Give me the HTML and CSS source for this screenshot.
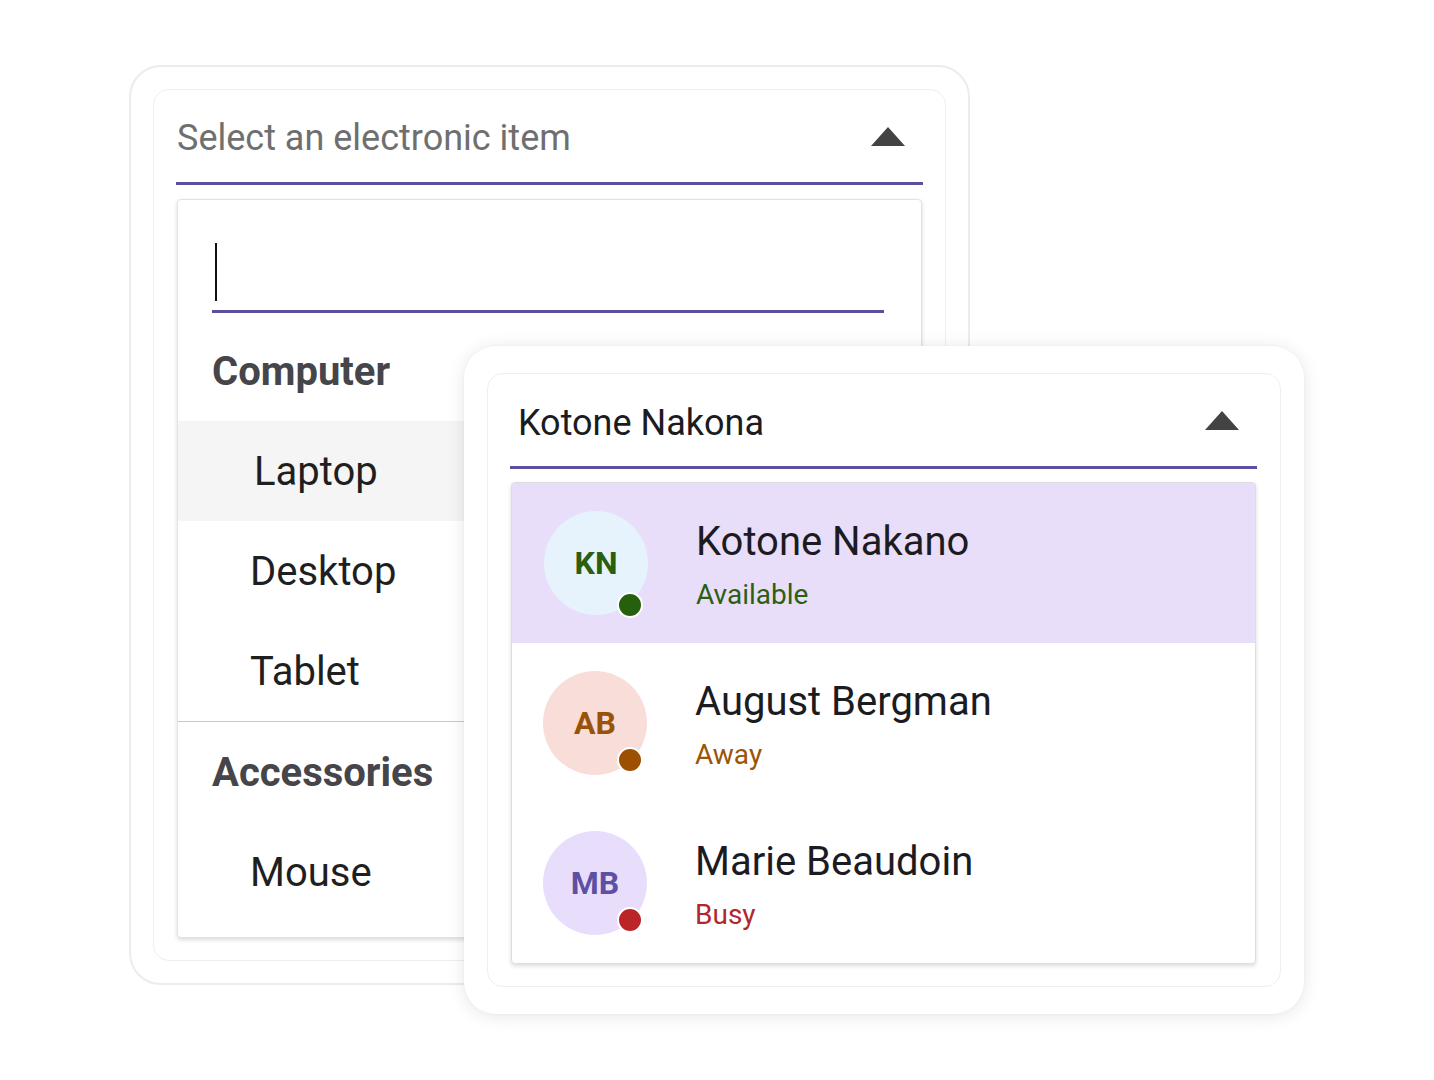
FILE: index.html
```html
<!DOCTYPE html>
<html>
<head>
<meta charset="utf-8">
<link rel="stylesheet" href="styles.css">
</head>
<body>
<div class="stage">
  <section class="card card-one">
    <div class="inner">
      <div class="field">
        <span class="placeholder">Select an electronic item</span>
        <svg class="arrow" width="34" height="19" viewBox="0 0 34 19"><polygon points="0,19 17,0 34,19" fill="#434343"/></svg>
      </div>
      <div class="popup">
        <div class="search"><span class="caret"></span></div>
        <div class="group-head">Computer</div>
        <div class="item item-hover">Laptop</div>
        <div class="item">Desktop</div>
        <div class="item">Tablet</div>
        <div class="divider"></div>
        <div class="group-head">Accessories</div>
        <div class="item">Mouse</div>
      </div>
    </div>
  </section>

  <section class="card card-two">
    <div class="inner">
      <div class="field">
        <span class="value">Kotone Nakona</span>
        <svg class="arrow" width="34" height="19" viewBox="0 0 34 19"><polygon points="0,19 17,0 34,19" fill="#434343"/></svg>
      </div>
      <div class="popup people">
        <div class="person selected">
          <div class="avatar av-kn">KN<span class="dot dot-green"></span></div>
          <div class="info">
            <div class="name">Kotone Nakano</div>
            <div class="status st-green">Available</div>
          </div>
        </div>
        <div class="person">
          <div class="avatar av-ab">AB<span class="dot dot-brown"></span></div>
          <div class="info">
            <div class="name">August Bergman</div>
            <div class="status st-brown">Away</div>
          </div>
        </div>
        <div class="person">
          <div class="avatar av-mb">MB<span class="dot dot-red"></span></div>
          <div class="info">
            <div class="name">Marie Beaudoin</div>
            <div class="status st-red">Busy</div>
          </div>
        </div>
      </div>
    </div>
  </section>
</div>
</body>
</html>
```

FILE: styles.css
```css
* { box-sizing: border-box; }
html, body { margin: 0; padding: 0; background: #ffffff; }
body { font-family: Roboto, "Noto Sans", "Liberation Sans", sans-serif; }

.stage {
  position: relative;
  width: 1434px;
  height: 1080px;
  padding: 65px 0 0 129px;
}

.card {
  background: #ffffff;
  border-radius: 32px;
}

.card-one {
  width: 841px;
  height: 920px;
  border: 2px solid #ececec;
  padding: 22px;
}

.card-two {
  position: absolute;
  left: 464px;
  top: 346px;
  width: 840px;
  height: 668px;
  padding: 27px 23px;
  box-shadow: 0 2px 18px rgba(0, 0, 0, 0.10), 0 0 3px rgba(0, 0, 0, 0.04);
}

.inner {
  height: 100%;
  border: 1px solid #efefef;
  border-radius: 16px;
  padding: 0 22px;
  display: flex;
  flex-direction: column;
}

.card-two .inner { padding: 0 23px 0 22px; }

.field {
  height: 95px;
  border-bottom: 3px solid #5c4f9f;
  display: flex;
  align-items: center;
  justify-content: space-between;
  flex-shrink: 0;
}

.placeholder {
  font-size: 36px;
  color: #6f6f6f;
  padding-left: 1px;
  padding-top: 4px;
}

.value {
  font-size: 36px;
  color: #1c1b1f;
  padding-left: 8px;
  padding-top: 5px;
}

.arrow { margin-right: 18px; display: block; }

.popup {
  margin: 14px 1px 0;
  background: #ffffff;
  border: 1px solid #e2e2e2;
  border-radius: 4px;
  box-shadow: 0 2px 4px rgba(0, 0, 0, 0.14);
  overflow: hidden;
  padding-bottom: 15px;
}

.search {
  margin: 0 37px 0 34px;
  padding-top: 43px;
  padding-bottom: 9px;
  border-bottom: 3px solid #5c4f9f;
}

.caret {
  display: block;
  width: 2px;
  height: 58px;
  margin-left: 3px;
  background: #111111;
}

.group-head {
  height: 100px;
  display: flex;
  align-items: center;
  padding-left: 34px;
  font-size: 40px;
  font-weight: 700;
  color: #45454a;
}

.search + .group-head { margin-top: 8px; }

.item {
  height: 100px;
  display: flex;
  align-items: center;
  padding-left: 72px;
  font-size: 40px;
  color: #1f1f1f;
}

.item-hover { background: #f5f5f5; padding-left: 76px; }

.divider { height: 1px; background: #c9c9c9; }

/* people list */
.people {
  margin-top: 13px;
  padding-bottom: 0;
  border-color: #dedede;
}

.person {
  height: 160px;
  display: flex;
  align-items: center;
  padding-left: 31px;
}

.person.selected { background: #e8defa; padding-left: 32px; }

.avatar {
  position: relative;
  width: 104px;
  height: 104px;
  border-radius: 50%;
  display: flex;
  align-items: center;
  justify-content: center;
  font-size: 32px;
  font-weight: 700;
  flex-shrink: 0;
}

.av-kn { background: #e6f2fc; color: #2b5f10; }
.av-ab { background: #f9ddd8; color: #9a5306; }
.av-mb { background: #e8defc; color: #5d50a3; }

.dot {
  position: absolute;
  right: 5px;
  bottom: -3px;
  width: 26px;
  height: 26px;
  border-radius: 50%;
  border: 2px solid #ffffff;
}

.person:not(.selected) .dot { right: 4px; bottom: 2px; }

.dot-green { background: #27600d; }
.dot-brown { background: #9c5000; }
.dot-red { background: #bb2527; }

.info {
  margin-left: 48px;
  padding-top: 5px;
}

.name {
  font-size: 40px;
  line-height: 48px;
  color: #1c1b1f;
}

.status {
  margin-top: 11px;
  font-size: 28px;
  line-height: 36px;
}

.st-green { color: #2c5f12; }
.st-brown { color: #9c5405; }
.st-red { color: #b3262b; }
```
